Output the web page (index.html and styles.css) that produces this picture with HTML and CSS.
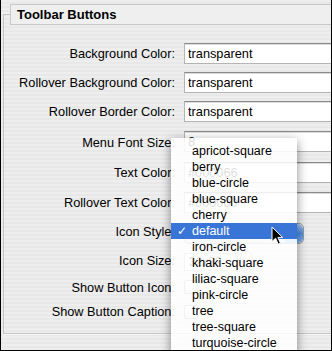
FILE: index.html
```html
<!DOCTYPE html>
<html lang="en">
<head>
    <meta charset="UTF-8">
    <title>Toolbar Buttons</title>
    <link rel="stylesheet" href="styles.css">
</head>
<body>

<div class="window">
    <div class="group">
        <div class="group-title">Toolbar Buttons</div>

        <div class="form">
            <label class="row">
                <span class="label">Background Color:</span>
                <input class="field" type="text" value="transparent">
            </label>
            <label class="row">
                <span class="label">Rollover Background Color:</span>
                <input class="field" type="text" value="transparent">
            </label>
            <label class="row">
                <span class="label">Rollover Border Color:</span>
                <input class="field" type="text" value="transparent">
            </label>
            <label class="row">
                <span class="label">Menu Font Size:</span>
                <input class="field" type="text" value="8">
            </label>
            <label class="row">
                <span class="label">Text Color:</span>
                <input class="field" type="text" value="#000066">
            </label>
            <label class="row">
                <span class="label">Rollover Text Color:</span>
                <input class="field" type="text" value="#000000">
            </label>
            <div class="row">
                <span class="label">Icon Style:</span>
                <div class="popup"><span class="popup-cap"></span></div>
            </div>
            <div class="row">
                <span class="label">Icon Size:</span>
                <div class="combo">
                    <span class="combo-field">32x32</span>
                    <span class="stepper"></span>
                </div>
            </div>
            <div class="row row-small">
                <span class="label">Show Button Icon:</span>
                <span class="checkbox"></span>
            </div>
            <div class="row row-small">
                <span class="label">Show Button Caption:</span>
                <span class="checkbox"></span>
            </div>
        </div>
    </div>

    <!-- open popup menu for Icon Style -->
    <ul class="menu">
        <li>apricot-square</li>
        <li>berry</li>
        <li>blue-circle</li>
        <li>blue-square</li>
        <li>cherry</li>
        <li class="selected"><span class="check">&#10003;</span>default</li>
        <li>iron-circle</li>
        <li>khaki-square</li>
        <li>liliac-square</li>
        <li>pink-circle</li>
        <li>tree</li>
        <li>tree-square</li>
        <li>turquoise-circle</li>
    </ul>

    <svg class="cursor" width="13" height="20" viewBox="0 0 13 20">
        <path d="M1 1 L1 15.5 L4.6 12.2 L7.2 18.2 L9.4 17.2 L6.9 11.4 L11.6 11.4 Z" fill="#000" stroke="#fff" stroke-width="1" stroke-linejoin="miter"/>
    </svg>
</div>

</body>
</html>
```

FILE: styles.css
```css
body {
    margin: 0;
    font-family: 'Liberation Sans', Arial, sans-serif;
    color: #000;
}

.window {
    position: relative;
    width: 332px;
    height: 351px;
    box-sizing: border-box;
    overflow: hidden;
    border-left: 1px solid #000;
    border-right: 1px solid #000;
    border-bottom: 1px solid #000;
    background: repeating-linear-gradient(#eeeeee 0, #eeeeee 2px, #e8e8e8 2px, #e8e8e8 4px);
}

.group {
    margin: 14px 0 0 2px;
    height: 318px;
    width: 400px;
    border-top: 1px solid #c4c4c4;
    border-left: 1px solid #c4c4c4;
    border-bottom: 1px solid #c4c4c4;
    box-shadow: 0 1px 0 #f8f8f8;
}

.group-title {
    margin: -11px 0 0 6px;
    height: 19px;
    line-height: 19px;
    padding-left: 6px;
    border: 1px solid #c8c8c8;
    background: #efefef;
    font-size: 13px;
    font-weight: bold;
}

.form {
    display: grid;
    grid-template-columns: 171px 1fr;
    grid-template-rows: 29px 29px 30px 31px 30px 29px 30px 28px 25px 23px;
    column-gap: 9px;
    padding-top: 18px;
}

.row {
    display: contents;
}

.label {
    align-self: center;
    text-align: right;
    font-size: 12.75px;
    white-space: nowrap;
    margin-top: -9px;
}

.field {
    align-self: start;
    width: 200px;
    height: 21px;
    box-sizing: border-box;
    margin: 0;
    padding: 0 0 0 3px;
    border: 1px solid #b4b4b4;
    border-top-color: #8a8a8a;
    box-shadow: inset 0 1px 0 #dcdcdc;
    background: #fff;
    font-family: 'Liberation Sans', Arial, sans-serif;
    font-size: 12.75px;
    color: #000;
    outline: none;
}

.popup {
    align-self: start;
    position: relative;
    width: 118px;
    height: 19px;
    margin-top: 2px;
    border-radius: 5px;
    background: linear-gradient(#fdfdfd, #dddddd);
    border: 1px solid #9a9a9a;
}

.popup-cap {
    position: absolute;
    right: 0;
    top: 0;
    width: 18px;
    height: 19px;
    border-radius: 0 5px 5px 0;
    background: linear-gradient(#a9c8f0, #4d8ee0 50%, #7fb2f0);
}

.combo {
    align-self: start;
    display: flex;
    align-items: center;
    gap: 2px;
    margin-top: 0;
}

.combo-field {
    width: 54px;
    height: 18px;
    box-sizing: border-box;
    border: 1px solid #b4b4b4;
    background: #fff;
    font-size: 12px;
    line-height: 16px;
    padding-left: 4px;
}

.stepper {
    width: 10px;
    height: 20px;
    border-radius: 5px;
    border: 1px solid #a8a8a8;
    background: linear-gradient(#ffffff, #dcdcdc);
}

.checkbox {
    align-self: start;
    width: 12px;
    height: 12px;
    margin-top: 1px;
    border: 1px solid #9a9a9a;
    border-radius: 2px;
    background: linear-gradient(#ffffff, #dedede);
}

.menu {
    position: absolute;
    left: 170px;
    top: 138px;
    width: 126px;
    margin: 0;
    padding: 5px 0 20px;
    list-style: none;
    background: rgba(255, 255, 255, 0.86);
    box-shadow: 0 3px 10px rgba(0, 0, 0, 0.45);
    font-size: 12.5px;
}

.menu li {
    position: relative;
    height: 16px;
    line-height: 16px;
    padding-left: 21px;
    white-space: nowrap;
}

.menu li.selected {
    background: #3875d7;
    color: #fff;
}

.menu .check {
    position: absolute;
    left: 6px;
    top: 0;
    font-family: 'DejaVu Sans', sans-serif;
    font-size: 12px;
    font-weight: bold;
}

.cursor {
    position: absolute;
    left: 270px;
    top: 226px;
}
```
